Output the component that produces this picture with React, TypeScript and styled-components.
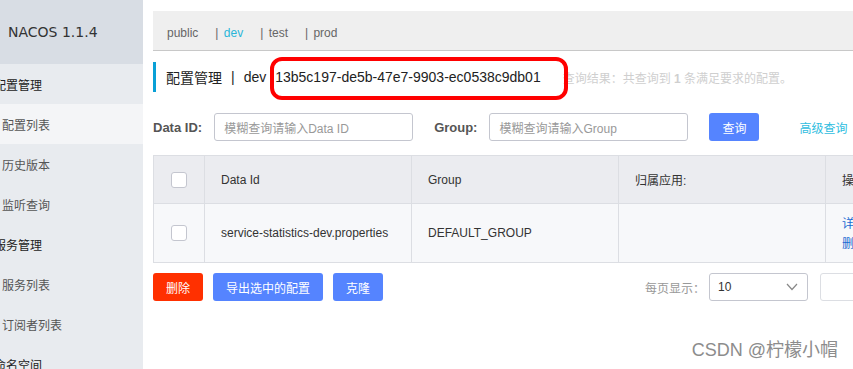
import styled, {createGlobalStyle} from "styled-components";
import {FC} from "react";

const GlobalStyle = createGlobalStyle`
    html, body {
        margin: 0;
        padding: 0;
        background: #fff;
        overflow: hidden;
    }
    body {
        font-family: "Liberation Sans", "Noto Sans CJK SC", sans-serif;
        font-size: 12px;
        color: #333;
    }
`;

const Page = styled.div`
    display: flex;
    width: 853px;
    height: 369px;
    overflow: hidden;
    position: relative;
`;

const Sidebar = styled.aside`
    width: 143px;
    flex-shrink: 0;
    background: #e8ebef;
    overflow: hidden;
`;

const Brand = styled.div`
    height: 64px;
    background: #d8dde4;
    display: flex;
    align-items: center;
    padding-left: 8px;
    font-family: "DejaVu Sans", sans-serif;
    font-size: 14px;
    color: #333;
`;

const MenuItem = styled.div<{ $group?: boolean; $active?: boolean }>`
    height: 40px;
    display: flex;
    align-items: center;
    white-space: nowrap;
    padding-left: ${p => (p.$group ? "0" : "2px")};
    text-indent: ${p => (p.$group ? "-6px" : "0")};
    font-size: 12px;
    color: ${p => (p.$group ? "#222" : "#555")};
    background: ${p => (p.$active ? "#f4f5f7" : "transparent")};
`;

const Main = styled.main`
    flex: 1;
    overflow: hidden;
    padding-left: 10px;
`;

const Content = styled.div`
    width: 760px;
`;

const NamespaceBar = styled.div`
    margin-top: 11px;
    height: 40px;
    box-sizing: border-box;
    padding: 4px 0 0 14px;
    background: #efefef;
    border-bottom: 1px solid #c8c8c8;
    display: flex;
    align-items: center;
    gap: 17px;
`;

const Namespace = styled.span<{ $current?: boolean }>`
    font-size: 12px;
    color: ${p => (p.$current ? "#2ab6d9" : "#666")};
    white-space: nowrap;
`;

const Sep = styled.span`
    color: #666;
    margin-right: 2px;
`;

const TitleRow = styled.div`
    margin-top: 11px;
    height: 30px;
    border-left: 3px solid #09a0d6;
    padding-left: 10px;
    display: flex;
    align-items: center;
    font-size: 14px;
    color: #222;
    white-space: nowrap;
`;

const Divider = styled.span`
    margin: 0 9px;
`;

const ConfigId = styled.span`
    position: relative;
    margin-left: 9px;

    &::after {
        content: "";
        position: absolute;
        left: -5px;
        right: -27px;
        top: -12px;
        bottom: -15px;
        border: 4px solid #f00;
        border-radius: 12px;
    }
`;

const ResultText = styled.span`
    margin-left: 22px;
    font-size: 12px;
    color: #cfcfcf;
`;

const FilterRow = styled.div`
    margin-top: 21px;
    display: flex;
    align-items: center;
    height: 28px;
`;

const Label = styled.label`
    font-size: 13px;
    font-weight: bold;
    color: #555;
    margin-right: 12px;
    white-space: nowrap;
`;

const Input = styled.div`
    width: 199px;
    height: 28px;
    box-sizing: border-box;
    border: 1px solid #c4c6cf;
    border-radius: 3px;
    display: flex;
    align-items: center;
    padding-left: 9px;
    font-size: 12px;
    color: #999;
    margin-right: 21px;
    white-space: nowrap;
`;

const Button = styled.button<{ $danger?: boolean }>`
    height: 28px;
    padding: 0 13px;
    border: none;
    border-radius: 3px;
    background: ${p => (p.$danger ? "#ff3000" : "#5584ff")};
    color: #fff;
    font-family: inherit;
    font-size: 12px;
    cursor: pointer;
`;

const LinkText = styled.a`
    margin-left: 40px;
    color: #2fbde0;
    font-size: 12px;
    white-space: nowrap;
`;

const Table = styled.div`
    margin-top: 14px;
    display: grid;
    grid-template-columns: 51px 207px 207px 207px 1fr;
    border-left: 1px solid #dcdee3;
    border-top: 1px solid #dcdee3;
`;

const Cell = styled.div<{ $head?: boolean; $center?: boolean }>`
    height: ${p => (p.$head ? "47px" : "58px")};
    background: ${p => (p.$head ? "#ebecf0" : "#f7f8fa")};
    border-right: 1px solid #dcdee3;
    border-bottom: 1px solid #dcdee3;
    display: flex;
    align-items: center;
    justify-content: ${p => (p.$center ? "center" : "flex-start")};
    padding: ${p => (p.$center ? "0" : "0 16px")};
    font-size: 12px;
    color: #333;
    white-space: nowrap;
    overflow: hidden;
`;

const Checkbox = styled.span`
    width: 16px;
    height: 16px;
    box-sizing: border-box;
    border: 1px solid #c4c6cf;
    border-radius: 3px;
    background: #fff;
`;

const Actions = styled.div`
    display: flex;
    flex-direction: column;
    line-height: 20px;
    color: #1a6ad2;
    padding-top: 2px;
`;

const Toolbar = styled.div`
    margin-top: 10px;
    display: flex;
    align-items: center;
    gap: 10px;
`;

const Pager = styled.div`
    margin-left: auto;
    display: flex;
    align-items: center;
`;

const PagerLabel = styled.span`
    color: #999;
    font-size: 12px;
    margin-right: 4px;
`;

const Select = styled.div`
    width: 99px;
    height: 28px;
    box-sizing: border-box;
    border: 1px solid #c4c6cf;
    border-radius: 3px;
    display: flex;
    align-items: center;
    justify-content: space-between;
    padding: 0 8px 0 8px;
    font-size: 12px;
    color: #333;
`;

const PageBox = styled.div`
    width: 93px;
    height: 28px;
    margin-left: 12px;
    box-sizing: border-box;
    border: 1px solid #dcdee3;
    border-radius: 3px;
`;

const Watermark = styled.div`
    position: absolute;
    right: 15px;
    bottom: 8px;
    font-size: 18px;
    color: #8c8c8c;
    text-shadow: 0 0 1px #fff;
`;

const sideMenu = [
    {label: "配置管理", group: true},
    {label: "配置列表", active: true},
    {label: "历史版本"},
    {label: "监听查询"},
    {label: "服务管理", group: true},
    {label: "服务列表"},
    {label: "订阅者列表"},
    {label: "命名空间", group: true},
];

const Chevron: FC = () => (
    <svg width="14" height="10" viewBox="0 0 14 10">
        <path d="M2 2 L7 7.5 L12 2" fill="none" stroke="#888" strokeWidth="1.2"/>
    </svg>
);

const App: FC = () => {
    return (
        <>
            <GlobalStyle/>
            <Page>
                <Sidebar>
                    <Brand>NACOS 1.1.4</Brand>
                    {sideMenu.map(item => (
                        <MenuItem key={item.label} $group={item.group} $active={item.active}>
                            {item.label}
                        </MenuItem>
                    ))}
                </Sidebar>

                <Main>
                    <Content>
                        <NamespaceBar>
                            <Namespace>public</Namespace>
                            <Namespace $current><Sep>|</Sep> dev</Namespace>
                            <Namespace><Sep>|</Sep> test</Namespace>
                            <Namespace><Sep>|</Sep> prod</Namespace>
                        </NamespaceBar>

                        <TitleRow>
                            配置管理<Divider>|</Divider>dev
                            <ConfigId>13b5c197-de5b-47e7-9903-ec0538c9db01</ConfigId>
                            <ResultText>查询结果：共查询到 <b>1</b> 条满足要求的配置。</ResultText>
                        </TitleRow>

                        <FilterRow>
                            <Label>Data ID:</Label>
                            <Input>模糊查询请输入Data ID</Input>
                            <Label>Group:</Label>
                            <Input>模糊查询请输入Group</Input>
                            <Button>查询</Button>
                            <LinkText>高级查询</LinkText>
                        </FilterRow>

                        <Table>
                            <Cell $head $center><Checkbox/></Cell>
                            <Cell $head>Data Id</Cell>
                            <Cell $head>Group</Cell>
                            <Cell $head>归属应用:</Cell>
                            <Cell $head>操作</Cell>

                            <Cell $center><Checkbox/></Cell>
                            <Cell>service-statistics-dev.properties</Cell>
                            <Cell>DEFAULT_GROUP</Cell>
                            <Cell/>
                            <Cell>
                                <Actions>
                                    <span>详情</span>
                                    <span>删除</span>
                                </Actions>
                            </Cell>
                        </Table>

                        <Toolbar>
                            <Button $danger>删除</Button>
                            <Button>导出选中的配置</Button>
                            <Button>克隆</Button>
                            <Pager>
                                <PagerLabel>每页显示：</PagerLabel>
                                <Select>
                                    <span>10</span>
                                    <Chevron/>
                                </Select>
                                <PageBox/>
                            </Pager>
                        </Toolbar>
                    </Content>
                </Main>

                <Watermark>CSDN @柠檬小帽</Watermark>
            </Page>
        </>
    );
};

export default App;
